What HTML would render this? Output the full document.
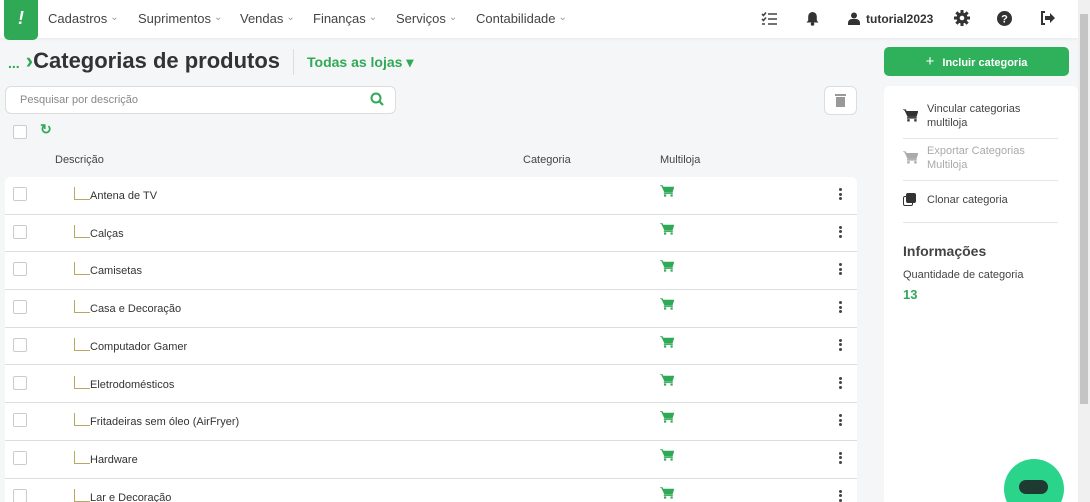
<!DOCTYPE html><html><head><meta charset="utf-8"><style>
*{box-sizing:border-box;margin:0;padding:0}
html,body{width:1090px;height:502px;overflow:hidden}
body{background:#f5f6f7;font-family:"Liberation Sans",sans-serif;color:#333;position:relative}
.hdr{position:absolute;left:0;top:0;width:1078px;height:38px;background:#fff;box-shadow:0 1px 3px rgba(0,0,0,.06)}
.logo{position:absolute;left:4px;top:0;width:34px;height:40px;background:#2fa956;border-radius:0 0 5px 5px;color:#fff;font-weight:bold;font-style:italic;font-size:18px;text-align:center;line-height:36px}
.nav{position:absolute;top:11px;font-size:13px;color:#444}
.nav span{position:absolute;white-space:nowrap}
.nav span:after{content:"⌄";font-size:10px;color:#999;margin-left:3px;position:relative;top:-3px}
.abs{position:absolute}
.title{left:8px;top:48px;font-size:22px;font-weight:bold;color:#333;white-space:nowrap}
.search{left:5px;top:86px;width:391px;height:28px;background:#fff;border:1px solid #ddd;border-radius:6px;font-size:11px;color:#888;padding:7px 14px}
.cb{width:14px;height:14px;border:1px solid #ccc;border-radius:2px;background:#fff;position:absolute}
.rows{left:5px;top:177px;width:852px;height:325px;background:#fff;border-radius:6px 6px 0 0;overflow:hidden}
.row{position:absolute;left:0;width:852px;height:37.7px;border-bottom:1px solid #ddd}
.row .t{position:absolute;left:85px;top:13px;font-size:11px;color:#333}
.row .l{position:absolute;left:69px;top:10px;width:16px;height:13px;border-left:1px solid #b8a860;border-bottom:1px solid #b8a860}
.cart{position:absolute;left:655px;top:8px}
.dots{position:absolute;left:834px;top:11px;width:3px}
.dots i{display:block;width:3px;height:3px;background:#444;border-radius:50%;margin-bottom:1.5px}
.panel{left:884px;top:86px;width:194px;height:420px;background:#fff;border-radius:6px}
.pi{position:absolute;left:19px;width:155px;border-bottom:1px solid #e5e5e5;font-size:11px;color:#444}
</style></head><body>
<svg width="0" height="0" style="position:absolute"><defs><symbol id="cart" viewBox="0 0 14 12"><path d="M0 0.5h2.5l0.6 1.5H14l-1.6 5H4.4L2 1.8" fill="currentColor" stroke="currentColor" stroke-width="0.5"/><rect x="3.8" y="7.5" width="9" height="1.4" fill="currentColor"/><rect x="4" y="9.4" width="2.2" height="2.2" fill="currentColor"/><rect x="10.5" y="9.4" width="2.2" height="2.2" fill="currentColor"/></symbol></defs></svg>
<div class="hdr">
<div class="logo">!</div>
<div class="nav"><span style="left:48px">Cadastros</span><span style="left:138px">Suprimentos</span><span style="left:240px">Vendas</span><span style="left:313px">Finanças</span><span style="left:396px">Serviços</span><span style="left:476px">Contabilidade</span></div>
<svg class="abs" style="left:761px;top:12px" width="16" height="14"><path d="M1 2l1.5 1.5L5 0.5M1 7l1.5 1.5L5 5.5M1 12h3M7 2h9M7 7h9M7 12h9" stroke="#444" stroke-width="1.6" fill="none"/></svg>
<svg class="abs" style="left:806px;top:11px" width="13" height="15" viewBox="0 0 13 15"><path d="M6.5 1a4.3 4.3 0 0 1 4.3 4.3V9.5l1.7 2H0.5l1.7-2V5.3A4.3 4.3 0 0 1 6.5 1z" fill="#333"/><circle cx="6.5" cy="13" r="1.8" fill="#333"/></svg>
<svg class="abs" style="left:848px;top:12px" width="12" height="13" viewBox="0 0 12 13"><circle cx="6" cy="3.5" r="3" fill="#333"/><path d="M0 13v-2a4 4 0 0 1 4-4h4a4 4 0 0 1 4 4v2z" fill="#333"/></svg>
<div class="abs" style="left:866px;top:12px;font-size:12px;font-weight:bold;color:#333">tutorial2023</div>
<svg class="abs" style="left:954px;top:10px" width="16" height="16" viewBox="0 0 16 16"><g fill="#333"><circle cx="8" cy="8" r="5.5"/><rect x="6.5" y="0" width="3" height="16"/><rect x="0" y="6.5" width="16" height="3"/><rect x="6.5" y="0" width="3" height="16" transform="rotate(45 8 8)"/><rect x="6.5" y="0" width="3" height="16" transform="rotate(-45 8 8)"/></g><circle cx="8" cy="8" r="2.3" fill="#fff"/></svg>
<svg class="abs" style="left:997px;top:11px" width="15" height="15"><circle cx="7.5" cy="7.5" r="7.5" fill="#333"/><text x="7.5" y="11.5" font-size="11" font-weight="bold" fill="#fff" text-anchor="middle" font-family="Liberation Sans">?</text></svg>
<svg class="abs" style="left:1040px;top:11px" width="15" height="14" viewBox="0 0 15 14"><path d="M5 1H2v12h3" stroke="#333" stroke-width="2" fill="none"/><path d="M5 5h5V2l5 5-5 5V9H5z" fill="#333"/></svg>
</div>
<div class="abs title"><span style="color:#2fa956;font-size:14px">...</span><span style="color:#2fa956"> ›</span>Categorias de produtos</div>
<div class="abs" style="left:293px;top:49px;width:1px;height:26px;background:#ddd"></div>
<div class="abs" style="left:307px;top:54px;font-size:14px;font-weight:bold;color:#2fa956">Todas as lojas ▾</div>
<div class="abs search">Pesquisar por descrição</div>
<svg class="abs" style="left:370px;top:92px" width="14" height="14"><circle cx="6" cy="6" r="4.5" stroke="#2fa956" stroke-width="2" fill="none"/><path d="M9.5 9.5l3.5 3.5" stroke="#2fa956" stroke-width="2.2"/></svg>
<div class="abs" style="left:824px;top:86px;width:33px;height:29px;border:1px solid #ddd;border-radius:6px;background:#fff"></div>
<svg class="abs" style="left:835px;top:93px" width="11" height="14"><rect x="0" y="1" width="11" height="2" fill="#999"/><rect x="1" y="4" width="9" height="10" fill="#999"/></svg>
<div class="cb" style="left:13px;top:125px"></div>
<div class="abs" style="left:40px;top:121px;color:#2fa956;font-weight:bold;font-size:14px">↻</div>
<div class="abs" style="left:55px;top:154px;font-size:11px;color:#444">Descrição</div>
<div class="abs" style="left:523px;top:154px;font-size:11px;color:#444">Categoria</div>
<div class="abs" style="left:660px;top:154px;font-size:11px;color:#444">Multiloja</div>
<div class="abs rows">
<div class="row" style="top:0"><div class="cb" style="left:8px;top:10px"></div><div class="l"></div><div class="t">Antena de TV</div><svg class="cart" width="14" height="12" style="color:#2fa956"><use href="#cart"/></svg><div class="dots"><i></i><i></i><i></i></div></div>
<div class="row" style="top:37.7px"><div class="cb" style="left:8px;top:10px"></div><div class="l"></div><div class="t">Calças</div><svg class="cart" width="14" height="12" style="color:#2fa956"><use href="#cart"/></svg><div class="dots"><i></i><i></i><i></i></div></div>
<div class="row" style="top:75.4px"><div class="cb" style="left:8px;top:10px"></div><div class="l"></div><div class="t">Camisetas</div><svg class="cart" width="14" height="12" style="color:#2fa956"><use href="#cart"/></svg><div class="dots"><i></i><i></i><i></i></div></div>
<div class="row" style="top:113.1px"><div class="cb" style="left:8px;top:10px"></div><div class="l"></div><div class="t">Casa e Decoração</div><svg class="cart" width="14" height="12" style="color:#2fa956"><use href="#cart"/></svg><div class="dots"><i></i><i></i><i></i></div></div>
<div class="row" style="top:150.8px"><div class="cb" style="left:8px;top:10px"></div><div class="l"></div><div class="t">Computador Gamer</div><svg class="cart" width="14" height="12" style="color:#2fa956"><use href="#cart"/></svg><div class="dots"><i></i><i></i><i></i></div></div>
<div class="row" style="top:188.5px"><div class="cb" style="left:8px;top:10px"></div><div class="l"></div><div class="t">Eletrodomésticos</div><svg class="cart" width="14" height="12" style="color:#2fa956"><use href="#cart"/></svg><div class="dots"><i></i><i></i><i></i></div></div>
<div class="row" style="top:226.2px"><div class="cb" style="left:8px;top:10px"></div><div class="l"></div><div class="t">Fritadeiras sem óleo (AirFryer)</div><svg class="cart" width="14" height="12" style="color:#2fa956"><use href="#cart"/></svg><div class="dots"><i></i><i></i><i></i></div></div>
<div class="row" style="top:263.9px"><div class="cb" style="left:8px;top:10px"></div><div class="l"></div><div class="t">Hardware</div><svg class="cart" width="14" height="12" style="color:#2fa956"><use href="#cart"/></svg><div class="dots"><i></i><i></i><i></i></div></div>
<div class="row" style="top:301.6px"><div class="cb" style="left:8px;top:10px"></div><div class="l"></div><div class="t">Lar e Decoração</div><svg class="cart" width="14" height="12" style="color:#2fa956"><use href="#cart"/></svg><div class="dots"><i></i><i></i><i></i></div></div>
</div>
<div class="abs" style="left:884px;top:47px;width:185px;height:29px;background:#2fb05a;border-radius:5px;color:#fff;font-size:11px;font-weight:bold;text-align:center;line-height:29px"><span style="font-size:15px;font-weight:normal;margin-right:8px">+</span>Incluir categoria</div>
<div class="abs panel">
<div class="pi" style="top:16px;height:37px;padding-left:24px;line-height:14px">Vincular categorias<br>multiloja<svg style="position:absolute;left:0;top:7px;color:#333" width="15" height="13"><use href="#cart"/></svg></div>
<div class="pi" style="top:58px;height:37px;padding-left:24px;line-height:14px;color:#aaa">Exportar Categorias<br>Multiloja<svg style="position:absolute;left:0;top:7px;color:#aaa" width="15" height="13"><use href="#cart"/></svg></div>
<div class="pi" style="top:108px;height:29px;padding-left:24px">Clonar categoria<span style="position:absolute;left:3px;top:-1px;width:10px;height:10px;background:#333;border-radius:2px;box-shadow:-3px 3px 0 -1px #fff,-3px 3px 0 0 #333"></span></div>
<div class="abs" style="left:19px;top:157px;font-size:14px;font-weight:bold;color:#444">Informações</div>
<div class="abs" style="left:19px;top:183px;font-size:11px;color:#444">Quantidade de categoria</div>
<div class="abs" style="left:19px;top:201px;font-size:13px;font-weight:bold;color:#2fa956">13</div>
</div>
<div class="abs" style="left:1078px;top:0;width:12px;height:502px;background:#f0f0f0"></div>
<div class="abs" style="left:1080px;top:14px;width:8px;height:390px;background:#c4c4c4"></div>
<div class="abs" style="left:1004px;top:459px;width:60px;height:60px;border-radius:50%;background:#2bd48b"></div>
<div class="abs" style="left:1019px;top:480px;width:29px;height:14px;border-radius:7px;background:#1f3a30"></div>
</body></html>
